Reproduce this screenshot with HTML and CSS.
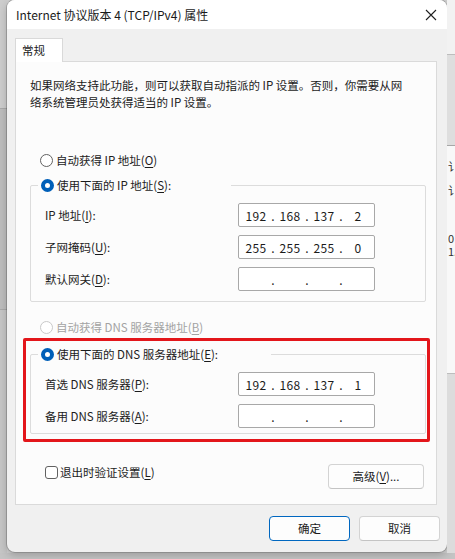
FILE: index.html
```html
<!DOCTYPE html>
<html lang="zh-CN">
<head>
    <meta charset="UTF-8">
    <meta name="viewport" content="width=device-width, initial-scale=1.0">
    <title>Internet 协议版本 4 (TCP/IPv4) 属性</title>
    <link rel="stylesheet" href="styles.css">
</head>
<body>

    <div class="desk">
        <!-- Ventanas de fondo -->
        <div class="edge-left">
            <div class="edge-block b1"></div>
            <div class="edge-block b2"></div>
            <div class="edge-block b3"></div>
        </div>

        <!-- Cuadro de diálogo -->
        <div class="dialog">
            <div class="titlebar">
                <span class="title">Internet 协议版本 4 (TCP/IPv4) 属性</span>
                <svg class="close" width="12" height="12" viewBox="0 0 12 12">
                    <path d="M1 1 L11 11 M11 1 L1 11" stroke="#1f1f1f" stroke-width="1.1" fill="none"/>
                </svg>
            </div>

            <div class="client">
                <div class="tabs">
                    <div class="tab">常规</div>
                </div>

                <div class="panel">
                    <p class="intro">如果网络支持此功能，则可以获取自动指派的 IP 设置。否则，你需要从网<br>络系统管理员处获得适当的 IP 设置。</p>

                    <label class="radio first">
                        <span class="dot"></span>自动获得 IP 地址(<u>O</u>)
                    </label>

                    <fieldset class="group">
                        <legend class="ip-legend">
                            <label class="radio checked"><span class="dot"></span>使用下面的 IP 地址(<u>S</u>):</label>
                        </legend>
                        <div class="row">
                            <span class="label">IP 地址(<u>I</u>):</span>
                            <div class="ipbox"><span>192</span><i>.</i><span>168</span><i>.</i><span>137</span><i>.</i><span>2</span></div>
                        </div>
                        <div class="row">
                            <span class="label">子网掩码(<u>U</u>):</span>
                            <div class="ipbox"><span>255</span><i>.</i><span>255</span><i>.</i><span>255</span><i>.</i><span>0</span></div>
                        </div>
                        <div class="row">
                            <span class="label">默认网关(<u>D</u>):</span>
                            <div class="ipbox"><span></span><i>.</i><span></span><i>.</i><span></span><i>.</i><span></span></div>
                        </div>
                    </fieldset>

                    <label class="radio disabled">
                        <span class="dot"></span>自动获得 DNS 服务器地址(<u>B</u>)
                    </label>

                    <!-- Recuadro rojo de la captura -->
                    <div class="highlight">
                        <fieldset class="group dns">
                            <legend class="dns-legend">
                                <label class="radio checked"><span class="dot"></span>使用下面的 DNS 服务器地址(<u>E</u>):</label>
                            </legend>
                            <div class="row">
                                <span class="label">首选 DNS 服务器(<u>P</u>):</span>
                                <div class="ipbox"><span>192</span><i>.</i><span>168</span><i>.</i><span>137</span><i>.</i><span>1</span></div>
                            </div>
                            <div class="row">
                                <span class="label">备用 DNS 服务器(<u>A</u>):</span>
                                <div class="ipbox"><span></span><i>.</i><span></span><i>.</i><span></span><i>.</i><span></span></div>
                            </div>
                        </fieldset>
                    </div>

                    <div class="footer-row">
                        <label class="check"><span class="box"></span>退出时验证设置(<u>L</u>)</label>
                        <button class="btn advanced">高级(<u>V</u>)...</button>
                    </div>
                </div>

                <div class="actions">
                    <button class="btn default">确定</button>
                    <button class="btn">取消</button>
                </div>
            </div>
        </div>

        <div class="edge-right">
            <div class="edge-block r1"></div>
            <div class="edge-block r2"></div>
            <div class="edge-block r3">
                <span class="peek p1">讠</span>
                <span class="peek p2">讠</span>
                <span class="peek p3">0</span>
                <span class="peek p4">1.</span>
            </div>
            <div class="edge-block r4"></div>
        </div>
    </div>
    <div class="bottom-strip"></div>

</body>
</html>
```

FILE: styles.css
```css
/* Estilos generales */
body {
    margin: 0;
    padding: 0;
    width: 455px;
    height: 559px;
    overflow: hidden;
    background-color: #cfcfcf;
    font-family: "Noto Sans CJK SC", "Noto Sans", sans-serif;
    font-size: 11.5px;
    color: #1b1b1b;
}

u {
    text-decoration-thickness: 1px;
    text-underline-offset: 2px;
}

.desk {
    display: flex;
    height: 553px;
}

/* Fondo a los lados */
.edge-left {
    width: 7px;
    display: flex;
    flex-direction: column;
    background-color: #c2c2c2;
}

.edge-left .b1 { height: 108px; background-color: #cdcdcd; }
.edge-left .b2 { height: 200px; background-color: #bdbdbd; border-top: 1px solid #a9a9a9; border-bottom: 1px solid #a9a9a9; }
.edge-left .b3 { flex: 1; background-color: #c6c6c6; }

.edge-right {
    width: 8px;
    display: flex;
    flex-direction: column;
    overflow: hidden;
}

.edge-right .r1 { height: 54px; background-color: #f2f2f2; border-bottom: 1px solid #bdbdbd; }
.edge-right .r2 { height: 90px; background-color: #dedede; border-bottom: 1px solid #a7a7a7; }
.edge-right .r3 { height: 227px; background-color: #f8f8f8; display: flex; flex-direction: column; border-bottom: 1px solid #bdbdbd; overflow: hidden; }
.edge-right .r4 { flex: 1; background-color: #dcdcdc; }

.peek {
    font-size: 11px;
    line-height: 13px;
    color: #333;
    white-space: nowrap;
    margin-left: 1px;
    width: 7px;
    overflow: hidden;
}

.peek.p1 { margin-top: 14px; }
.peek.p2 { margin-top: 11px; }
.peek.p3 { margin-top: 35px; }
.peek.p4 { margin-top: 0; }

.bottom-strip {
    height: 6px;
    background-color: #c4c4c4;
}

/* Cuadro de diálogo */
.dialog {
    width: 440px;
    height: 552px;
    background-color: #f0f0f0;
    border-radius: 8px;
    box-shadow: 0 0 0 1px rgba(0, 0, 0, 0.18), 0 3px 8px rgba(0, 0, 0, 0.22);
    overflow: hidden;
    display: flex;
    flex-direction: column;
}

.titlebar {
    height: 29px;
    background-color: #ffffff;
    display: flex;
    align-items: center;
    justify-content: space-between;
    padding: 0 9px 0 9px;
    flex-shrink: 0;
}

.title {
    font-size: 12px;
    color: #1a1a1a;
    line-height: 16px;
}

.close {
    margin-right: 1px;
}

.client {
    padding: 9px 7px 0 8px;
    display: flex;
    flex-direction: column;
}

/* Pestañas */
.tabs {
    display: flex;
}

.tab {
    width: 48px;
    height: 24px;
    box-sizing: border-box;
    background-color: #ffffff;
    border: 1px solid #d9d9d9;
    border-bottom: none;
    margin-bottom: -1px;
    position: relative;
    z-index: 1;
    line-height: 23px;
    padding-left: 6px;
}

.panel {
    width: 422px;
    height: 444px;
    box-sizing: border-box;
    background-color: #fcfcfc;
    border: 1px solid #dadada;
    padding: 15px 10px 0 14px;
    display: flex;
    flex-direction: column;
}

.intro {
    margin: 0;
    line-height: 17px;
    white-space: nowrap;
}

/* Botones de opción */
.radio {
    display: flex;
    align-items: center;
    line-height: 17px;
    white-space: nowrap;
}

.radio .dot {
    width: 13px;
    height: 13px;
    box-sizing: border-box;
    border-radius: 50%;
    border: 1px solid #616161;
    background-color: #ffffff;
    margin-right: 3px;
    flex-shrink: 0;
}

.radio.checked .dot {
    border: 4px solid #005fb8;
    background-color: #ffffff;
}

.radio.disabled {
    color: #a3a3a3;
}

.radio.disabled .dot {
    border-color: #c9c9c9;
}

.radio.first {
    margin-top: 41px;
    padding-left: 10px;
}

.radio.disabled {
    margin-top: 17px;
    padding-left: 10px;
}

/* Grupos */
.group {
    margin: 8px 0 0 0;
    padding: 9px 0 10px 0;
    border: 1px solid #dcdcdc;
    border-radius: 2px;
    min-width: 0;
    display: flex;
    flex-direction: column;
    gap: 8px;
}

.group legend {
    padding: 0;
    margin-left: 7px;
    background-color: #fcfcfc;
}

.ip-legend {
    width: 193px;
}

.dns-legend {
    width: 233px;
}

.group legend .radio {
    padding-left: 3px;
}

.row {
    display: flex;
    align-items: center;
    padding-left: 14px;
}

.label {
    width: 193px;
    line-height: 17px;
}

.ipbox {
    width: 137px;
    height: 24px;
    box-sizing: border-box;
    border: 1px solid #a8a8a8;
    border-radius: 2px;
    background-color: #ffffff;
    display: flex;
    align-items: center;
    padding-left: 3px;
    font-size: 12px;
    letter-spacing: 0.3px;
}

.ipbox span {
    width: 28px;
    text-align: center;
}

.ipbox i {
    font-style: normal;
    width: 6px;
    text-align: center;
}

/* Recuadro rojo */
.highlight {
    margin: 2px -4px 0 -7px;
    border: 3px solid #e3161b;
    border-radius: 2px;
    padding: 5px 1px 5px 4px;
}

.group.dns {
    margin-top: 0;
    padding-bottom: 5px;
}

/* Fila inferior */
.footer-row {
    display: flex;
    align-items: center;
    justify-content: space-between;
    margin-top: 22px;
    padding-left: 15px;
    padding-right: 2px;
}

.check {
    display: flex;
    align-items: center;
    line-height: 17px;
    margin-top: -8px;
}

.check .box {
    width: 13px;
    height: 13px;
    box-sizing: border-box;
    border: 1px solid #616161;
    border-radius: 3px;
    background-color: #ffffff;
    margin-right: 2px;
}

.btn {
    font-family: inherit;
    font-size: 11.5px;
    color: #1b1b1b;
    background-color: #fdfdfd;
    border: 1px solid #d3d3d3;
    border-bottom-color: #c4c4c4;
    border-radius: 4px;
    height: 25px;
    padding: 0;
    line-height: 17px;
}

.btn.advanced {
    width: 96px;
}

.actions {
    display: flex;
    justify-content: flex-end;
    gap: 9px;
    margin-top: 11px;
}

.actions .btn {
    width: 81px;
}

.btn.default {
    border: 1px solid #0067c0;
}
```
